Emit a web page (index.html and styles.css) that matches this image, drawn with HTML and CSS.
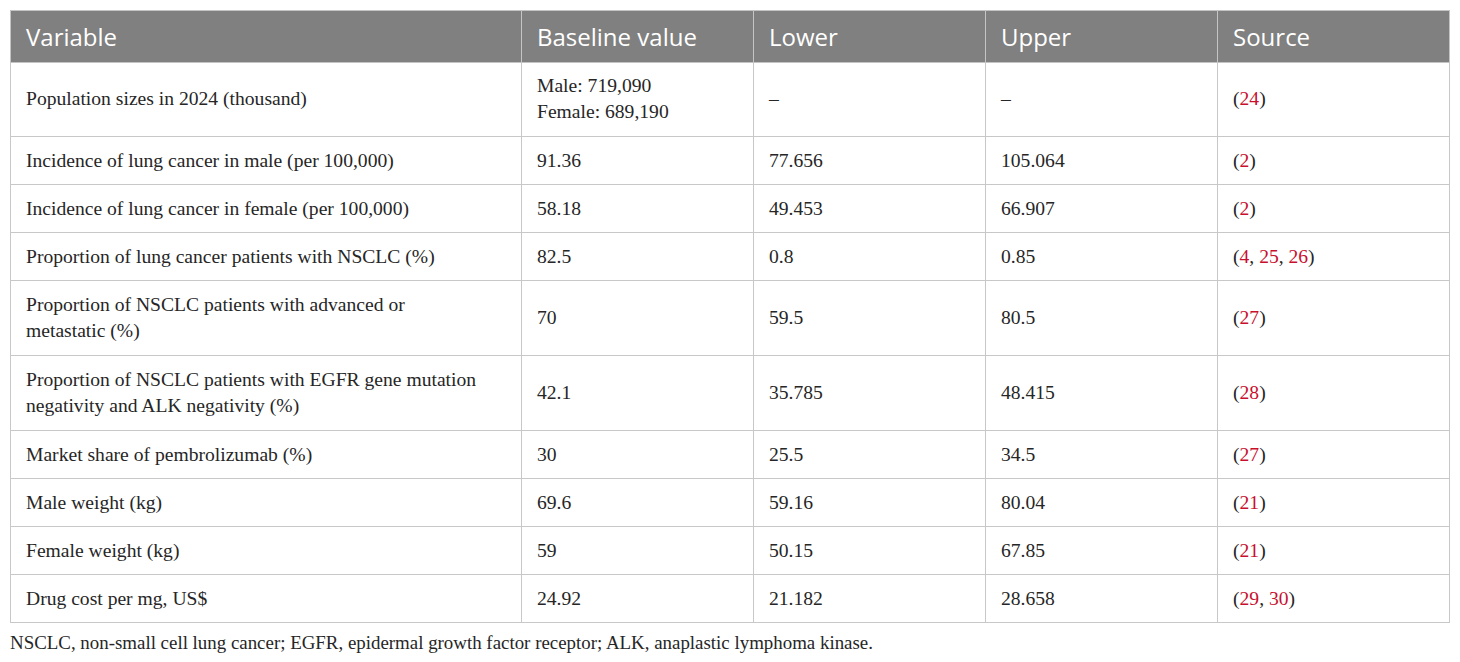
FILE: index.html
```html
<!DOCTYPE html>
<html lang="en">
<head>
<meta charset="utf-8">
<title>Table</title>
<link rel="stylesheet" href="styles.css">
</head>
<body>
<div class="page">
  <table class="data">
    <colgroup>
      <col class="c-var"><col class="c-num"><col class="c-num"><col class="c-num"><col class="c-num">
    </colgroup>
    <thead>
      <tr><th>Variable</th><th>Baseline value</th><th>Lower</th><th>Upper</th><th>Source</th></tr>
    </thead>
    <tbody>
      <tr class="first"><td>Population sizes in 2024 (thousand)</td><td>Male: 719,090<br>Female: 689,190</td><td>–</td><td>–</td><td>(<span class="ref">24</span>)</td></tr>
      <tr><td>Incidence of lung cancer in male (per 100,000)</td><td>91.36</td><td>77.656</td><td>105.064</td><td>(<span class="ref">2</span>)</td></tr>
      <tr><td>Incidence of lung cancer in female (per 100,000)</td><td>58.18</td><td>49.453</td><td>66.907</td><td>(<span class="ref">2</span>)</td></tr>
      <tr><td>Proportion of lung cancer patients with NSCLC (%)</td><td>82.5</td><td>0.8</td><td>0.85</td><td>(<span class="ref">4</span>, <span class="ref">25</span>, <span class="ref">26</span>)</td></tr>
      <tr class="tall"><td>Proportion of NSCLC patients with advanced or<br>metastatic (%)</td><td>70</td><td>59.5</td><td>80.5</td><td>(<span class="ref">27</span>)</td></tr>
      <tr class="tall"><td>Proportion of NSCLC patients with EGFR gene mutation<br>negativity and ALK negativity (%)</td><td>42.1</td><td>35.785</td><td>48.415</td><td>(<span class="ref">28</span>)</td></tr>
      <tr><td>Market share of pembrolizumab (%)</td><td>30</td><td>25.5</td><td>34.5</td><td>(<span class="ref">27</span>)</td></tr>
      <tr><td>Male weight (kg)</td><td>69.6</td><td>59.16</td><td>80.04</td><td>(<span class="ref">21</span>)</td></tr>
      <tr><td>Female weight (kg)</td><td>59</td><td>50.15</td><td>67.85</td><td>(<span class="ref">21</span>)</td></tr>
      <tr><td>Drug cost per mg, US$</td><td>24.92</td><td>21.182</td><td>28.658</td><td>(<span class="ref">29</span>, <span class="ref">30</span>)</td></tr>
    </tbody>
  </table>
  <p class="note">NSCLC, non-small cell lung cancer; EGFR, epidermal growth factor receptor; ALK, anaplastic lymphoma kinase.</p>
</div>
</body>
</html>
```
FILE: styles.css
```css
html, body {
  margin: 0;
  padding: 0;
  background: #ffffff;
}
.page {
  padding: 10px 10px 0 10px;
}
.data {
  border-collapse: collapse;
  table-layout: fixed;
  width: 1440px;
  color: #262626;
}
.c-var { width: 511px; }
.c-num { width: 232px; }
.data th {
  background: #808080;
  color: #ffffff;
  font-family: "Open Sans", "Noto Sans", sans-serif;
  font-weight: 400;
  font-size: 24px;
  line-height: 30px;
  text-align: left;
  padding: 11px 15px 10px 15px;
  border: 1px solid #c4c4c4;
}
.data td {
  font-family: "Liberation Serif", "Times New Roman", serif;
  font-size: 19.6px;
  line-height: 25px;
  padding: 11px 15px;
  border: 1px solid #c8c8c8;
  vertical-align: middle;
}
.data tr.first td {
  line-height: 26px;
  padding-top: 10px;
  padding-bottom: 11px;
}
.data tr.tall td {
  line-height: 26px;
  padding-top: 11px;
  padding-bottom: 11px;
}
.ref {
  color: #c8102e;
}
.note {
  margin: 8px 0 0 0;
  font-family: "Liberation Serif", "Times New Roman", serif;
  font-size: 18.9px;
  line-height: 24px;
  color: #262626;
}
```
